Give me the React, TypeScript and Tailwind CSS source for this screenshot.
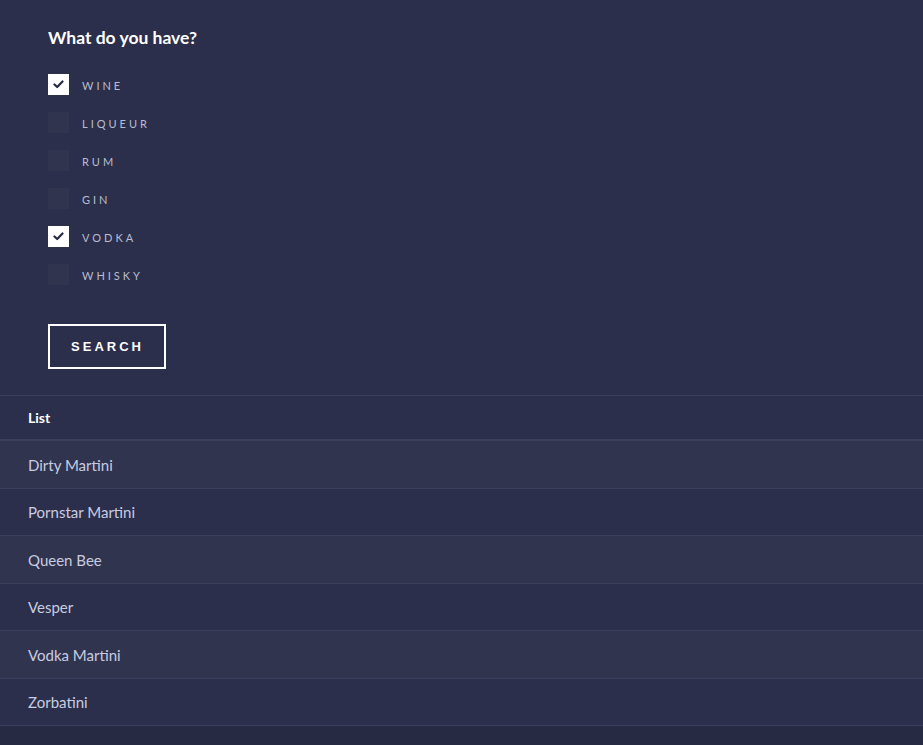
import { useState } from "react";

const SPIRITS = ["Wine", "Liqueur", "Rum", "Gin", "Vodka", "Whisky"];
const COCKTAILS = ["Dirty Martini", "Pornstar Martini", "Queen Bee", "Vesper", "Vodka Martini", "Zorbatini"];

const CheckIcon = () => (
    <svg width="11" height="9" viewBox="0 0 11 9" fill="none">
        <path d="M1.5 4.5 L4.2 7 L9.5 1.5" stroke="#252944" strokeWidth="2.2" strokeLinecap="round" strokeLinejoin="round" />
    </svg>
);

const App = () => {
    const [checked, setChecked] = useState<string[]>(["Wine", "Vodka"]);

    const toggle = (name: string) => {
        setChecked((prev) => (prev.includes(name) ? prev.filter((n) => n !== name) : [...prev, name]));
    };

    return (
        <div className="min-h-[745px] bg-[#262a42] font-['Lato','Noto_Sans',sans-serif]">
            <div className="bg-[#2b2f4b] px-12 pt-[27px] pb-[26px]">
                <h2 className="text-[17.5px] font-bold text-white leading-[22px]">What do you have?</h2>
                <div className="mt-[25px] flex flex-col gap-[17px]">
                    {SPIRITS.map((s) => {
                        const on = checked.includes(s);
                        return (
                            <label key={s} className="flex items-start h-[21px] gap-[13px] cursor-pointer" onClick={() => toggle(s)}>
                                <span
                                    className={
                                        on
                                            ? "w-[21px] h-[21px] bg-white flex items-center justify-center"
                                            : "w-[21px] h-[21px] bg-[#30344f]"
                                    }
                                >
                                    {on && <CheckIcon />}
                                </span>
                                <span className="text-[11px] uppercase tracking-[3px] text-[#b9bdd0] leading-[19px] mt-[2px]">{s}</span>
                            </label>
                        );
                    })}
                </div>
                <button className="mt-[39px] w-[118px] h-[45px] border-2 border-white text-white text-[13px] font-bold tracking-[3px] pl-[1px] font-['Liberation_Sans',Arial,sans-serif]">
                    SEARCH
                </button>
            </div>
            <div className="border-t border-[#3b3f5e] bg-[#2b2f4b]">
                <div className="h-[45px] flex items-center px-7 border-b-2 border-[#3b3f5e]">
                    <span className="text-[14px] font-bold text-white">List</span>
                </div>
                {COCKTAILS.map((c, i) => (
                    <div
                        key={c}
                        className={
                            (i % 2 === 0 ? "bg-[#30344f]" : "bg-[#2b2f4b]") +
                            " h-[47.5px] flex items-center px-7 border-b border-[#3b3f5e]"
                        }
                    >
                        <span className="text-[15px] text-[#c9cce0] leading-[20px] mt-[1px]">{c}</span>
                    </div>
                ))}
            </div>
        </div>
    );
};

export default App;
